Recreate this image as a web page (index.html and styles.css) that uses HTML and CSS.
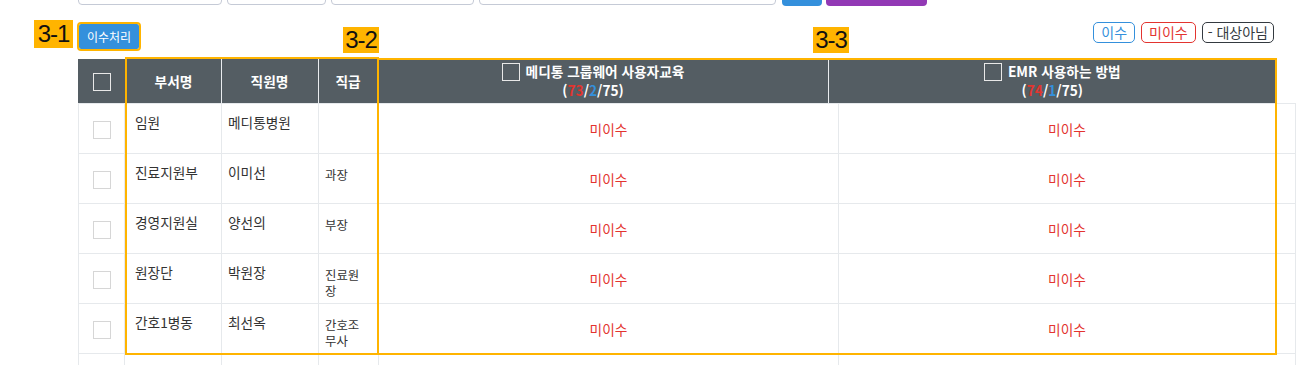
FILE: index.html
```html
<!DOCTYPE html>
<html lang="ko">
<head>
  <meta charset="UTF-8">
  <title>이수처리</title>
  <link rel="stylesheet" href="styles.css">
</head>
<body>
  <div class="page">
    <div class="filters">
      <div class="field w144"></div>
      <div class="field w99"></div>
      <div class="field w143"></div>
      <div class="field w297"></div>
      <div class="btn-search"></div>
      <div class="btn-excel"></div>
    </div>

    <div class="toolbar">
      <button class="btn-complete">이수처리</button>
      <div class="legend">
        <span class="badge done">이수</span>
        <span class="badge undone">미이수</span>
        <span class="badge none">- 대상아님</span>
      </div>
    </div>

    <table class="grid-head">
      <colgroup>
        <col style="width:48px"><col style="width:95px"><col style="width:97px"><col style="width:60px"><col style="width:450px"><col style="width:448px">
      </colgroup>
      <tr>
        <th><span class="chk chk-dark"></span></th>
        <th>부서명</th>
        <th>직원명</th>
        <th>직급</th>
        <th class="first-course">
          <div class="course"><span class="chk chk-dark"></span>메디통 그룹웨어 사용자교육</div>
          <div>(<span class="red">73</span>/<span class="blue">2</span>/75)</div>
        </th>
        <th>
          <div class="course"><span class="chk chk-dark"></span>EMR 사용하는 방법</div>
          <div>(<span class="red">74</span>/<span class="blue">1</span>/75)</div>
        </th>
      </tr>
    </table>

    <table class="grid-body">
      <colgroup>
        <col style="width:46px"><col style="width:97px"><col style="width:97px"><col style="width:60px"><col style="width:460px"><col style="width:457px">
      </colgroup>
      <tr>
        <td class="c-chk"><span class="chk"></span></td>
        <td class="c-dept">임원</td>
        <td class="c-name">메디통병원</td>
        <td class="c-rank"></td>
        <td class="c-state">미이수</td>
        <td class="c-state">미이수</td>
      </tr>
      <tr>
        <td class="c-chk"><span class="chk"></span></td>
        <td class="c-dept">진료지원부</td>
        <td class="c-name">이미선</td>
        <td class="c-rank">과장</td>
        <td class="c-state">미이수</td>
        <td class="c-state">미이수</td>
      </tr>
      <tr>
        <td class="c-chk"><span class="chk"></span></td>
        <td class="c-dept">경영지원실</td>
        <td class="c-name">양선의</td>
        <td class="c-rank">부장</td>
        <td class="c-state">미이수</td>
        <td class="c-state">미이수</td>
      </tr>
      <tr>
        <td class="c-chk"><span class="chk"></span></td>
        <td class="c-dept">원장단</td>
        <td class="c-name">박원장</td>
        <td class="c-rank">진료원장</td>
        <td class="c-state">미이수</td>
        <td class="c-state">미이수</td>
      </tr>
      <tr>
        <td class="c-chk"><span class="chk"></span></td>
        <td class="c-dept">간호1병동</td>
        <td class="c-name">최선옥</td>
        <td class="c-rank">간호조무사</td>
        <td class="c-state">미이수</td>
        <td class="c-state">미이수</td>
      </tr>
      <tr>
        <td class="c-chk"><span class="chk"></span></td>
        <td class="c-dept">간호2병동</td>
        <td class="c-name">김수정</td>
        <td class="c-rank">간호사</td>
        <td class="c-state">미이수</td>
        <td class="c-state">미이수</td>
      </tr>
    </table>

    <!-- 설명용 표시 -->
    <span class="tag tag-1">3-1</span>
    <span class="tag tag-2">3-2</span>
    <span class="tag tag-3">3-3</span>
    <div class="box box-2"></div>
    <div class="box box-3"></div>
  </div>
</body>
</html>
```

FILE: styles.css
```css
html, body {
  margin: 0;
  background-color: #fff;
  overflow: hidden;
}
body {
  font-family: "Noto Sans CJK KR", "Noto Sans", sans-serif;
  font-size: 13.7px;
  color: #333;
}
.page {
  position: relative;
  display: flow-root;
  height: 365px;
  overflow: hidden;
  padding-left: 78px;
}
.filters {
  display: flex;
  align-items: flex-start;
  gap: 5px;
  margin-top: -31px;
  height: 37px;
}
.field {
  height: 34px;
  border: 1px solid #c5cad6;
  border-radius: 4px;
  background: #fff;
}
.w144 { width: 142px; }
.w99 { width: 97px; }
.w143 { width: 141px; }
.w297 { width: 295px; }
.btn-search {
  width: 40px;
  height: 37px;
  border-radius: 4px;
  background-color: #3490dc;
  margin-left: 1px;
}
.btn-excel {
  width: 101px;
  height: 37px;
  border-radius: 4px;
  background-color: #9239b5;
  margin-left: -1px;
}
.toolbar {
  display: flex;
  justify-content: space-between;
  align-items: flex-start;
  width: 1196px;
  margin-top: 16px;
  height: 29px;
}
.btn-complete {
  margin: 2px 0 0 1px;
  width: 60px;
  height: 25px;
  padding: 0;
  border: none;
  border-radius: 2px;
  outline: 2px solid #ffb400;
  background-color: #3490dc;
  color: #fff;
  font-family: inherit;
  font-size: 12px;
  line-height: 25px;
}
.legend {
  display: flex;
  gap: 6px;
}
.badge {
  display: inline-block;
  height: 19px;
  line-height: 19px;
  padding: 0 7px;
  border: 1px solid;
  border-radius: 5px;
  font-size: 14px;
}
.badge.done { color: #3490dc; border-color: #3490dc; }
.badge.undone { color: #e3342f; border-color: #e3342f; }
.badge.none { color: #343a40; border-color: #343a40; padding: 0 5px; }

table {
  border-collapse: collapse;
  table-layout: fixed;
}
.grid-head {
  width: 1198px;
  margin-top: 8px;
}
.grid-head th {
  height: 44px;
  padding: 0;
  background-color: #545d63;
  color: #fff;
  font-weight: bold;
  font-size: 13.7px;
  line-height: 19px;
  text-align: center;
  vertical-align: middle;
  border-left: 1px solid #e9ecef;
}
.grid-head th:first-child { border-left: none; }
.grid-head th.first-course { padding-right: 20px; }
.course {
  display: flex;
  justify-content: center;
  align-items: center;
  gap: 6px;
}
.red { color: #e3342f; }
.blue { color: #3490dc; }

.chk {
  display: inline-block;
  box-sizing: border-box;
  width: 18px;
  height: 18px;
  border: 1px solid #d6d6d6;
  background: #fff;
  vertical-align: middle;
}
.chk-dark {
  border-color: #e8e8e8;
  background: transparent;
}

.grid-body {
  width: 1217px;
}
.grid-body tr {
  height: 50px;
}
.grid-body td {
  padding: 0;
  border: 1px solid #e6e9ec;
  vertical-align: top;
  line-height: 18px;
}
.grid-body td.c-chk {
  text-align: center;
  vertical-align: middle;
}
.grid-body td.c-dept { padding: 9px 8px 0 10px; }
.grid-body td.c-name { padding: 9px 6px 0 6px; }
.grid-body td.c-rank {
  padding: 13px 8px 0 6px;
  font-size: 12.4px;
  line-height: 16px;
  word-break: break-all;
}
.grid-body td.c-state {
  text-align: center;
  vertical-align: middle;
  color: #e3342f;
}

.tag {
  position: absolute;
  background-color: #ffb400;
  color: #111;
  font-family: "Liberation Sans", Arial, sans-serif;
  font-size: 24px;
  letter-spacing: -1px;
  white-space: nowrap;
  text-align: center;
}
.tag-1 { left: 34px; top: 20px; width: 39px; height: 28px; line-height: 28px; }
.tag-2 { left: 343px; top: 27px; width: 36px; height: 26px; line-height: 26px; }
.tag-3 { left: 813px; top: 27px; width: 36px; height: 26px; line-height: 26px; }
.box {
  position: absolute;
  box-sizing: border-box;
  border: 2px solid #ffb400;
}
.box-2 { left: 125px; top: 57px; width: 254px; height: 298px; }
.box-3 { left: 377px; top: 58px; width: 900px; height: 297px; }
```
